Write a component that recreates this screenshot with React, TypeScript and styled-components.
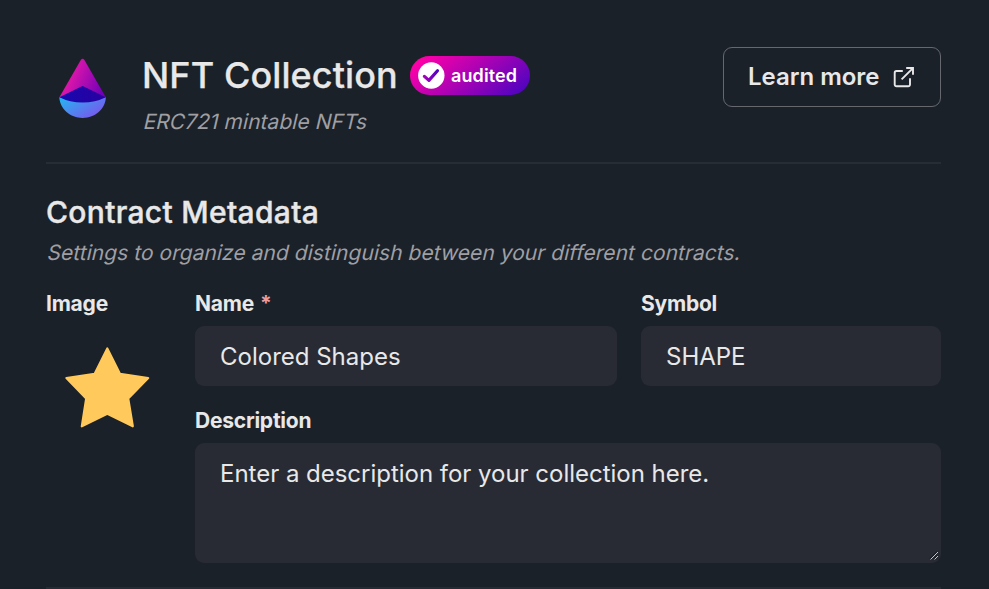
import React from 'react';
import styled, { createGlobalStyle } from 'styled-components';

const GlobalStyle = createGlobalStyle`
  *, *::before, *::after { box-sizing: border-box; }
  body {
    margin: 0;
    background: #1b2129;
    color: #e8e8e9;
    font-family: Inter, "Liberation Sans", sans-serif;
    overflow: hidden;
  }
`;

const Page = styled.main`
  width: 989px;
  height: 589px;
  padding: 47px 48px 0 46px;
  overflow: hidden;
  background: #1b2129;
`;

const Header = styled.header`
  display: flex;
  align-items: flex-start;
  height: 117px;
  border-bottom: 2px solid #272d35;
`;

const Logo = styled.svg`
  display: block;
  flex: none;
  width: 73px;
  height: 73px;
  margin-right: 23px;
`;

const Heading = styled.div`
  flex: 1;
`;

const TitleRow = styled.div`
  display: flex;
  align-items: center;
  gap: 12px;
  height: 57px;
`;

const Title = styled.h1`
  margin: 0;
  width: 256px;
  font-size: 36px;
  line-height: 57px;
  font-weight: 500;
  letter-spacing: 0.09px;
  -webkit-text-stroke: 0.25px currentColor;
  white-space: nowrap;
`;

const Badge = styled.span`
  display: flex;
  align-items: center;
  gap: 6px;
  width: 120px;
  height: 39px;
  padding: 0 0 1px 8px;
  border-radius: 20px;
  background: linear-gradient(142deg, #ff00a8 8%, #5204bf 92%);
  color: #fff;
  font-size: 18px;
  font-weight: 600;
  letter-spacing: 0.1px;
`;

const BadgeIcon = styled.svg`
  width: 27px;
  height: 27px;
`;

/* Slanted upright letterforms rather than the font's own italic. */
const Note = styled.p<{ $height: number }>`
  margin: 0 0 0 2px;
  width: max-content;
  height: ${(p) => p.$height}px;
  line-height: ${(p) => p.$height}px;
  color: #9f9fa3;
  font-size: 21px;
  letter-spacing: 0.045px;
  white-space: nowrap;
  transform: skewX(-13deg);
`;

const LearnMore = styled.button`
  display: flex;
  align-items: center;
  gap: 14px;
  width: 218px;
  height: 60px;
  padding: 0 0 2px 24px;
  border: 1px solid #66686e;
  border-radius: 9px;
  background: transparent;
  color: #e8e8e9;
  font: 600 24px Inter, "Liberation Sans", sans-serif;
  letter-spacing: -0.02px;
  white-space: nowrap;
`;

const LinkIcon = styled.svg`
  flex: none;
  width: 22px;
  height: 22px;
  margin-top: 2px;
`;

const Section = styled.section`
  height: 423px;
  padding-top: 27px;
`;

const SectionTitle = styled.h2`
  margin: 0;
  height: 43px;
  font-size: 30px;
  line-height: 42px;
  font-weight: 500;
  letter-spacing: 0.32px;
  -webkit-text-stroke: 0.4px currentColor;
`;

const Form = styled.div`
  display: grid;
  grid-template-columns: 125px 422px 300px;
  column-gap: 24px;
  margin-top: 19px;
`;

const ImageField = styled.div`
  grid-row: span 2;
`;

const Field = styled.div<{ $wide?: boolean }>`
  grid-column: ${(p) => (p.$wide ? 'span 2' : 'auto')};
  height: ${(p) => (p.$wide ? 153 : 117)}px;
`;

const Label = styled.label`
  display: block;
  height: 36px;
  font-size: 21px;
  line-height: 27px;
  font-weight: 660;
  letter-spacing: -0.22px;
`;

const Required = styled.span`
  margin-left: 6px;
  color: #f19a9a;
`;

const Input = styled.input`
  display: block;
  width: 100%;
  height: 60px;
  padding: 0 25px;
  border: 0;
  border-radius: 9px;
  outline: 0;
  background: #282b33;
  color: #e8e8e9;
  font: 400 24px Inter, "Liberation Sans", sans-serif;
`;

const TextAreaBox = styled.div`
  position: relative;
`;

const TextArea = styled.textarea`
  display: block;
  width: 100%;
  height: 120px;
  padding: 13px 25px;
  border: 0;
  border-radius: 9px;
  outline: 0;
  background: #282b33;
  color: #e8e8e9;
  resize: none;
  font: 400 24px/36px Inter, "Liberation Sans", sans-serif;
  letter-spacing: -0.02px;
`;

const ResizeGrip = styled.svg`
  position: absolute;
  right: 2px;
  bottom: 2px;
  width: 10px;
  height: 10px;
  pointer-events: none;
`;

const Star = styled.svg`
  display: block;
  width: 125px;
  height: 125px;
`;

const Divider = styled.hr`
  margin: 0;
  border: 0;
  height: 2px;
  background: #272b33;
`;

export default function App() {
  return (
    <>
      <GlobalStyle />
      <Page>
        <Header>
          <Logo viewBox="46 47 73 73">
            <defs>
              <linearGradient id="cone" x1="0" y1="0.3" x2="1" y2="0.65">
                <stop offset="0.25" stopColor="#dd16aa" />
                <stop offset="1" stopColor="#7200b8" />
              </linearGradient>
              <linearGradient id="bowl" x1="0" y1="0" x2="1" y2="0.7">
                <stop offset="0" stopColor="#22b8f0" />
                <stop offset="1" stopColor="#7a55ee" />
              </linearGradient>
              <linearGradient id="core" x1="0" y1="0" x2="1" y2="0">
                <stop offset="0" stopColor="#1708b0" />
                <stop offset="1" stopColor="#2a00a0" />
              </linearGradient>
            </defs>
            <path d="M59.4 97.3 80.8 60q1.8-2.6 3.6 0l21.4 37.3Z" fill="url(#cone)" />
            <path d="M59.3 97.3C60 109 70 118 82.6 118s22.6-9 23.3-20.7Z" fill="url(#bowl)" />
            <path d="M59.4 97.3 81.4 86.4q1.2-.6 2.4 0l22 10.9q-10.5 5.3-23.2 5.3T59.4 97.3Z" fill="url(#core)" />
          </Logo>
          <Heading>
            <TitleRow>
              <Title>NFT Collection</Title>
              <Badge>
                <BadgeIcon viewBox="0 0 27 27">
                  <defs>
                    <linearGradient id="tick" x1="0" y1="0" x2="1" y2="0">
                      <stop offset="0" stopColor="#a800bb" />
                      <stop offset="1" stopColor="#5204bf" />
                    </linearGradient>
                  </defs>
                  <circle cx="13.3" cy="13.5" r="13.2" fill="#fff" />
                  <path d="m6.4 14.4 4.5 4L19.5 8.7" fill="none" stroke="url(#tick)" strokeWidth="3.2" strokeLinecap="round" strokeLinejoin="round" />
                </BadgeIcon>
                audited
              </Badge>
            </TitleRow>
            <Note $height={36}>ERC721 mintable NFTs</Note>
          </Heading>
          <LearnMore>
            Learn more
            <LinkIcon viewBox="0 0 22 22" fill="none" stroke="currentColor" strokeWidth="1.9">
              <path d="M9.8 5H3.5a1.8 1.8 0 0 0-1.8 1.8v11.7a1.8 1.8 0 0 0 1.8 1.8h11.7a1.8 1.8 0 0 0 1.8-1.8v-6.3" />
              <path d="M13.2 2h6.8v6.8M19.7 2.3 8.6 13.4" />
            </LinkIcon>
          </LearnMore>
        </Header>
        <Section>
          <SectionTitle>Contract Metadata</SectionTitle>
          <Note $height={37}>Settings to organize and distinguish between your different contracts.</Note>
          <Form>
            <ImageField>
              <Label>Image</Label>
              <Star viewBox="46 326 125 125">
                <path
                  d="M107.3 348.5 119.9 373.8 148.2 378.1 128.2 398.4 132.8 426.3 107.3 413.7 81.8 426.3 86.2 398.4 66.4 378.1 94.7 373.8Z"
                  fill="#ffca5b"
                  stroke="#ffca5b"
                  strokeWidth="2.2"
                  strokeLinejoin="round"
                />
              </Star>
            </ImageField>
            <Field>
              <Label htmlFor="name">
                Name<Required>*</Required>
              </Label>
              <Input id="name" defaultValue="Colored Shapes" />
            </Field>
            <Field>
              <Label htmlFor="symbol">Symbol</Label>
              <Input id="symbol" defaultValue="SHAPE" />
            </Field>
            <Field $wide>
              <Label htmlFor="description">Description</Label>
              <TextAreaBox>
                <TextArea id="description" defaultValue="Enter a description for your collection here." />
                <ResizeGrip viewBox="0 0 10 10" fill="none" strokeWidth="1">
                  <path d="M1 7.5 8 .5M5 7.5 8 4.5" stroke="#15171c" />
                  <path d="M1.5 8.5 9 1M5.5 8.5 9 5" stroke="#c4c4c7" />
                </ResizeGrip>
              </TextAreaBox>
            </Field>
          </Form>
        </Section>
        <Divider />
      </Page>
    </>
  );
}
